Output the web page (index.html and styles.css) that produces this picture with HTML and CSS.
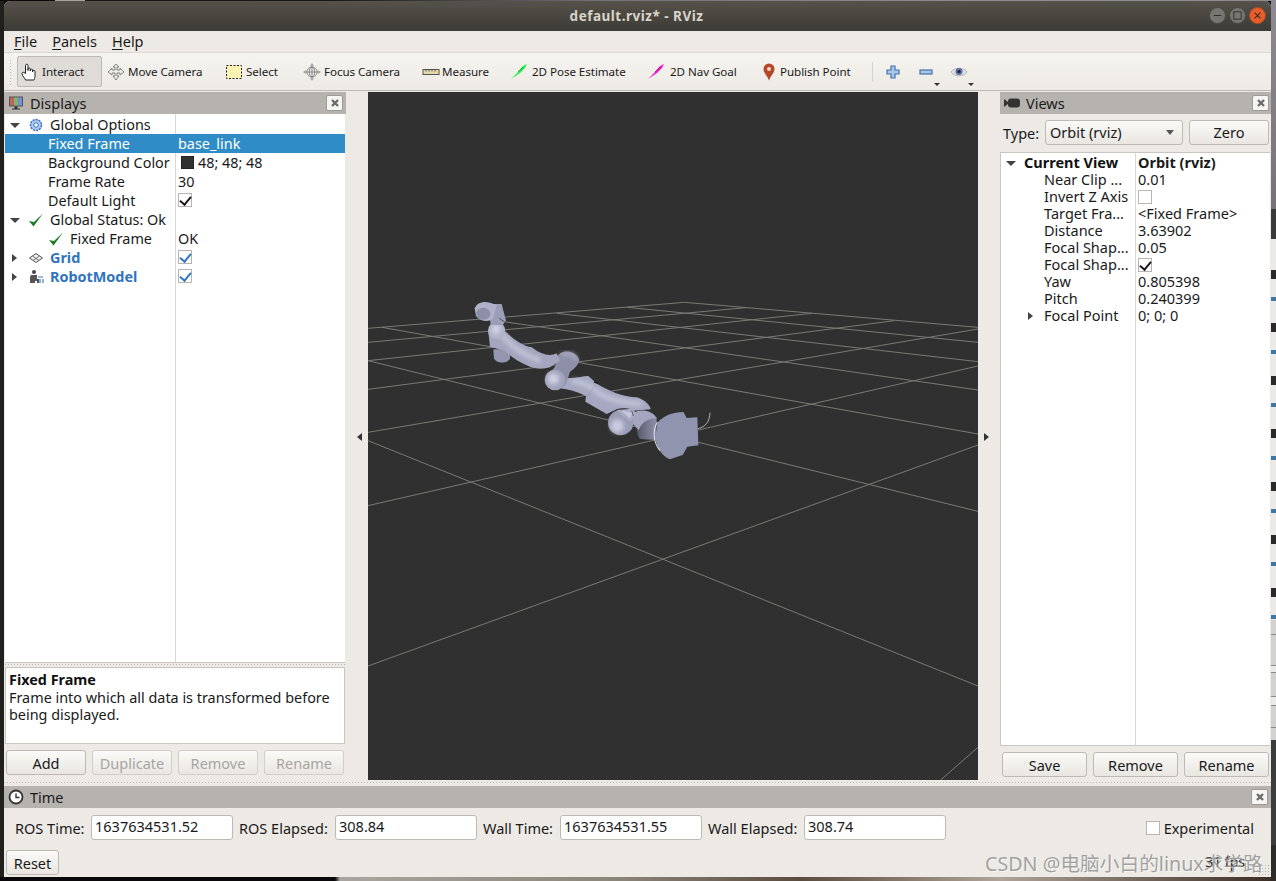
FILE: index.html
```html
<!DOCTYPE html>
<html lang="en">
<head>
<meta charset="utf-8">
<title>default.rviz* - RViz</title>
<link rel="stylesheet" href="styles.css">
</head>
<body>
<div class="window">
  <header class="titlebar">
    <span class="title">default.rviz* - RViz</span>
    <div class="wm">
      <span class="wm-btn"><svg viewBox="0 0 16 16" class="wm-ico"><path d="M3.5 8h9" stroke="#2e2d29" stroke-width="1.2"/></svg></span>
      <span class="wm-btn"><svg viewBox="0 0 16 16" class="wm-ico"><rect x="3.5" y="3.5" width="9" height="9" fill="none" stroke="#2e2d29" stroke-width="1.1"/></svg></span>
      <span class="wm-btn wm-close"><svg viewBox="0 0 16 16" class="wm-ico"><path d="M4.5 4.5l7 7M11.5 4.5l-7 7" stroke="#3a2418" stroke-width="1.3"/></svg></span>
    </div>
  </header>
  <nav class="menubar">
    <span><u>F</u>ile</span><span><u>P</u>anels</span><span><u>H</u>elp</span>
  </nav>
  <div class="toolbar">
    <span class="grip"></span>
    <div class="tool tool-on tool-interact">
      <svg class="ti" viewBox="0 0 18 18"><path d="M4.500 17C4 15 1 13 1 10.500c0-1 1-1.500 2-1l1.500 1V2.500c0-1.700 2.500-1.700 2.500 0V7.500V6c0-1.200 2.300-1.200 2.300 0v2V7c0-1.200 2.300-1.200 2.300 0v2-.800c0-1.200 2.400-1.200 2.400 0V13c0 2-.8 3-1 4z" fill="#fff" stroke="#222" stroke-width="1"/></svg>
      <span>Interact</span>
    </div>
    <div class="tool tool-move">
      <svg class="ti" viewBox="0 0 18 18"><path d="M9 1l3 3h-2v3h3V5l4 4-4 3v-2h-3v3h2l-3 4-3-4h2v-3H5v2L1 9l4-4v2h3V4H6z" fill="#ececec" stroke="#777" stroke-width=".9"/></svg>
      <span>Move Camera</span>
    </div>
    <div class="tool tool-select">
      <svg class="ti" viewBox="0 0 18 18"><rect x="1.500" y="2.500" width="15" height="13" fill="#fbf3b3" stroke="#222" stroke-width="1" stroke-dasharray="2 1.500"/></svg>
      <span>Select</span>
    </div>
    <div class="tool tool-focus">
      <svg class="ti" viewBox="0 0 18 18"><circle cx="9" cy="9" r="5" fill="#eee" stroke="#888"/><path d="M9 1v16M1 9h16M6.500 9a2.500 5 0 0 0 5 0M6.500 9a2.500 5 0 0 1 5 0" fill="none" stroke="#888" stroke-width="1"/><path d="M9 0l2 3H7zM9 18l2-3H7zM0 9l3-2v4zM18 9l-3-2v4z" fill="#aaa"/></svg>
      <span>Focus Camera</span>
    </div>
    <div class="tool tool-measure">
      <svg class="ti" viewBox="0 0 18 18"><rect x="1" y="6.500" width="16" height="5" fill="#e4d9a8" stroke="#555"/><path d="M4 6.500v2M7 6.500v2M10 6.500v2M13 6.500v2" stroke="#555"/></svg>
      <span>Measure</span>
    </div>
    <div class="tool tool-pose">
      <svg class="ti" viewBox="0 0 18 18"><path d="M1 16L8 9l5-6 4-2-2 4-5 5z" fill="#22f04a"/><path d="M8 9l5-5" stroke="#0e8a25" stroke-width=".8"/></svg>
      <span>2D Pose Estimate</span>
    </div>
    <div class="tool tool-nav">
      <svg class="ti" viewBox="0 0 18 18"><path d="M1 16L8 9l5-6 4-2-2 4-5 5z" fill="#f21cc8"/><path d="M8 9l5-5" stroke="#8a0f70" stroke-width=".8"/></svg>
      <span>2D Nav Goal</span>
    </div>
    <div class="tool tool-point">
      <svg class="ti" viewBox="0 0 18 18"><path d="M9 17.500C7.500 13 3.500 10 3.500 6a5.500 5.500 0 0 1 11 0c0 4-4 7-5.500 11.500z" fill="#b5482a"/><circle cx="9" cy="6" r="2" fill="#f0d9c6"/></svg>
      <span>Publish Point</span>
    </div>
    <span class="tool-sep"></span>
    <div class="tool tool-icon tool-plus">
      <svg class="ti" viewBox="0 0 18 18"><path d="M7 3h4v4h4v4h-4v4H7v-4H3V7h4z" fill="#a9c6e6" stroke="#3f74ad" stroke-width="1.200"/></svg>
    </div>
    <div class="tool tool-icon tool-minus">
      <svg class="ti" viewBox="0 0 18 18"><rect x="3" y="7" width="12" height="4" fill="#a9c6e6" stroke="#3f74ad" stroke-width="1.200"/></svg>
      <i class="drop"></i>
    </div>
    <div class="tool tool-icon tool-eye">
      <svg class="ti" viewBox="0 0 18 18"><path d="M1 9c3-5 13-5 16 0-3 5-13 5-16 0z" fill="#dfe1e8" stroke="#aaa" stroke-width=".8"/><circle cx="9" cy="8.500" r="3.500" fill="#5f6ea5"/><circle cx="9" cy="8.500" r="1.500" fill="#1c2236"/></svg>
      <i class="drop"></i>
    </div>
  </div>

  <div class="workspace">
    <section class="dock dock-left">
      <div class="dock-title">
        <svg class="dock-ico" viewBox="0 0 16 16"><rect x="1" y="1.500" width="14" height="10" fill="#555"/><rect x="2" y="2.500" width="4" height="8" fill="#c2605e"/><rect x="6" y="2.500" width="4" height="8" fill="#79b56f"/><rect x="10" y="2.500" width="4" height="8" fill="#7a8fcf"/><path d="M6.500 11.500h3v2h-3zM4 13.500h8v1H4z" fill="#333"/></svg>
        <span>Displays</span>
        <span class="dock-close"><svg viewBox="0 0 10 10"><path d="M2 2l6 6M8 2L2 8" stroke="#6b6b6b" stroke-width="2.400"/></svg></span>
      </div>
      <div class="tree tree-displays">
        <div class="tree-row"><span class="c1"><i class="tw tw-down"></i><svg class="ri" viewBox="0 0 16 16"><circle cx="8" cy="8" r="5.500" fill="#a9c8ee" stroke="#3f74c0" stroke-width="1.500" stroke-dasharray="2.200 .9"/><circle cx="8" cy="8" r="2.200" fill="#fff" stroke="#3f74c0"/></svg><span class="lbl">Global Options</span></span><span class="c2"></span></div>
        <div class="tree-row sel"><span class="c1 ind"><span class="lbl">Fixed Frame</span></span><span class="c2">base_link</span></div>
        <div class="tree-row"><span class="c1 ind"><span class="lbl">Background Color</span></span><span class="c2"><i class="swatch"></i>48; 48; 48</span></div>
        <div class="tree-row"><span class="c1 ind"><span class="lbl">Frame Rate</span></span><span class="c2">30</span></div>
        <div class="tree-row"><span class="c1 ind"><span class="lbl">Default Light</span></span><span class="c2"><i class="cb on"></i></span></div>
        <div class="tree-row"><span class="c1"><i class="tw tw-down"></i><svg class="ri" viewBox="0 0 16 16"><path d="M1 9l4.500 5.500L15 1.500 6 10z" fill="#1f7a2a"/></svg><span class="lbl">Global Status: Ok</span></span><span class="c2"></span></div>
        <div class="tree-row"><span class="c1 ind2"><svg class="ri" viewBox="0 0 16 16"><path d="M1 9l4.500 5.500L15 1.500 6 10z" fill="#1f7a2a"/></svg><span class="lbl">Fixed Frame</span></span><span class="c2">OK</span></div>
        <div class="tree-row"><span class="c1"><i class="tw tw-right"></i><svg class="ri" viewBox="0 0 16 16"><path d="M8 3.500l6.500 4.500L8 12.500 1.500 8z" fill="#eee" stroke="#555"/><path d="M4.500 6l6.500 4.500M11.500 6L5 10.500" stroke="#555" stroke-width=".8"/></svg><span class="lbl lnk">Grid</span></span><span class="c2"><i class="cb on blue"></i></span></div>
        <div class="tree-row"><span class="c1"><i class="tw tw-right"></i><svg class="ri" viewBox="0 0 16 16"><circle cx="6" cy="3" r="2" fill="#444"/><path d="M3 6h6v4h2v4H9v-2H7v2H2V8z" fill="#555"/><path d="M10 8h5M12 10v4M15 10v4" stroke="#4a7bc0" stroke-width="1.200"/></svg><span class="lbl lnk">RobotModel</span></span><span class="c2"><i class="cb on blue"></i></span></div>
      </div>
      <div class="split-h"></div>
      <div class="help">
        <b>Fixed Frame</b><br>Frame into which all data is transformed before being displayed.
      </div>
      <div class="btn-row">
        <button class="btn">Add</button>
        <button class="btn off">Duplicate</button>
        <button class="btn off">Remove</button>
        <button class="btn off">Rename</button>
      </div>
    </section>

    <div class="gutter"><i class="arrow-l"></i></div>

    <main class="center">
      <svg class="scene" viewBox="20 -594 1518 2064" preserveAspectRatio="none">
        <defs>
          <filter id="soft" x="-40%" y="-40%" width="180%" height="180%"><feGaussianBlur stdDeviation="6"/></filter>
          <linearGradient id="cyl" x1="0" y1="0" x2="1" y2="0">
            <stop offset="0" stop-color="#55586a"/><stop offset=".5" stop-color="#74778c"/><stop offset="1" stop-color="#8c8fa6"/>
          </linearGradient>
        </defs>
        <g class="grid-lines">
          <path d="M808 37L1538 112M665 52L1538 157M490 70L1538 215M340 92L1538 300M55 112L1538 432M20 212L1538 664M20 452L1538 1188"/>
          <path d="M20 115L808 37M20 157L960 53M20 212L1125 70M20 298L1330 92M20 427L1538 117M20 647L1538 228M20 1128L1538 465M1445 1470L1538 1372"/>
        </g>
        <g transform="translate(248.900 0) scale(.8297 1)" stroke-linejoin="round" fill="none">
          <!-- end effector -->
          <path d="M750 368C748 395 738 410 714 416" stroke="#c9c9c9" stroke-width="2.500"/>
          <path d="M532 392L590 382L588 450L540 447C530 435 528 410 532 392Z" fill="url(#cyl)"/>
          <path d="M592 398C612 376 640 366 670 366L680 384L712 382L715 466L682 470L668 495L630 508C605 500 590 470 586 445Z" fill="#9094ae"/>
          <path d="M592 396C578 420 578 455 600 482" stroke="#dfe1ea" stroke-width="3"/>
          <!-- wrist -->
          <path d="M522 368C540 356 578 360 590 385C568 384 548 394 536 420L515 398Z" fill="#a3a6be"/>
          <circle cx="482" cy="398" r="38" fill="#9a9db6"/>
          <circle cx="472" cy="408" r="20" fill="#c9cbde" filter="url(#soft)"/>
          <path d="M470 360L518 356L530 372L512 394L488 378Z" fill="#a9acc3"/>
          <path d="M484 362L518 368L510 385Z" fill="#c5c7da"/>
          <path d="M515 362L520 378" stroke="#33343c" stroke-width="2"/>
          <!-- forearm -->
          <path d="M305 262C340 268 370 258 385 258L412 282C440 300 490 322 530 322C555 330 570 345 572 358L520 362C505 352 480 355 470 358L440 372L376 335L378 318C350 305 325 298 300 295Z" fill="#a5a8c0"/>
          <path d="M335 272C360 276 390 285 410 305C440 325 490 340 545 342" stroke="#cdd0e1" stroke-width="14" filter="url(#soft)" opacity=".75"/>
          <path d="M408 284L378 322" stroke="#8d90a8" stroke-width="1.500"/>
          <path d="M402 276L415 280" stroke="#1c1c1c" stroke-width="4"/>
          <!-- elbow -->
          <path d="M300 190C320 178 350 185 358 210C355 225 345 235 330 245C325 260 320 280 312 290L260 280L262 250C285 240 295 215 285 205Z" fill="#8d90a8"/>
          <path d="M305 195C322 185 342 192 350 210" stroke="#b0b3c8" stroke-width="9" filter="url(#soft)"/>
          <circle cx="285" cy="270" r="31" fill="#a0a3bb"/>
          <circle cx="280" cy="266" r="17" fill="#d0d2e3" filter="url(#soft)"/>
          <!-- upper arm -->
          <path d="M100 178H150V205C145 222 108 222 102 205Z" fill="#9497af"/>
          <path d="M138 125C160 150 190 168 215 172C245 195 270 200 290 190L300 212L270 232C250 238 225 238 205 228C175 215 150 200 135 182L90 170L85 125Z" fill="#a3a6be"/>
          <path d="M125 135C150 165 190 195 240 212" stroke="#cfd1e2" stroke-width="14" filter="url(#soft)" opacity=".75"/>
          <circle cx="110" cy="122" r="26" fill="#b0b3c8"/>
          <circle cx="108" cy="118" r="13" fill="#d4d6e5" filter="url(#soft)"/>
          <!-- end cap -->
          <path d="M88 70L100 42L125 42L138 92L128 105L92 105Z" fill="#9b9eb6"/>
          <path d="M44 55C50 38 70 32 90 38L110 45L100 85C88 98 60 95 48 78Z" fill="#aeb1c7"/>
          <ellipse cx="70" cy="71" rx="21" ry="18" fill="#8c8fa6"/>
          <path d="M118 85L137 98" stroke="#2c2c2c" stroke-width="2"/>
        </g>
      </svg>
    </main>

    <div class="gutter"><i class="arrow-r"></i></div>

    <section class="dock dock-right">
      <div class="dock-title title-views">
        <svg class="dock-ico" viewBox="0 0 16 16"><path d="M0 4l4 3V9l-4 3z" fill="#333"/><rect x="4" y="3.500" width="12" height="9" rx="3" fill="#333"/></svg>
        <span>Views</span>
        <span class="dock-close"><svg viewBox="0 0 10 10"><path d="M2 2l6 6M8 2L2 8" stroke="#6b6b6b" stroke-width="2.400"/></svg></span>
      </div>
      <div class="type-row">
        <span class="type-lbl">Type:</span>
        <span class="combo"><span>Orbit (rviz)</span><i class="combo-arrow"></i></span>
        <button class="btn btn-zero">Zero</button>
      </div>
      <div class="tree tree-views">
        <div class="vrow"><span class="v1"><i class="tw tw-down tw-v"></i><b class="vhead">Current View</b></span><span class="v2"><b>Orbit (rviz)</b></span></div>
        <div class="vrow"><span class="v1 vind">Near Clip ...</span><span class="v2">0.01</span></div>
        <div class="vrow"><span class="v1 vind">Invert Z Axis</span><span class="v2"><i class="cb"></i></span></div>
        <div class="vrow"><span class="v1 vind">Target Fra...</span><span class="v2">&lt;Fixed Frame&gt;</span></div>
        <div class="vrow"><span class="v1 vind">Distance</span><span class="v2">3.63902</span></div>
        <div class="vrow"><span class="v1 vind">Focal Shap...</span><span class="v2">0.05</span></div>
        <div class="vrow"><span class="v1 vind">Focal Shap...</span><span class="v2"><i class="cb on"></i></span></div>
        <div class="vrow"><span class="v1 vind">Yaw</span><span class="v2">0.805398</span></div>
        <div class="vrow"><span class="v1 vind">Pitch</span><span class="v2">0.240399</span></div>
        <div class="vrow"><span class="v1 vsub"><i class="tw tw-right tw-v2"></i>Focal Point</span><span class="v2">0; 0; 0</span></div>
      </div>
      <div class="btn-row btn-row-views">
        <button class="btn">Save</button>
        <button class="btn">Remove</button>
        <button class="btn">Rename</button>
      </div>
    </section>
  </div>
  <div class="split-bottom"></div>

  <section class="time-dock">
    <div class="dock-title title-time">
      <svg class="dock-ico" viewBox="0 0 16 16"><circle cx="8" cy="8" r="6.500" fill="#fff" stroke="#333" stroke-width="1.800"/><path d="M8 4.500V8.500H11.500" fill="none" stroke="#333" stroke-width="1.400"/></svg>
      <span>Time</span>
      <span class="dock-close"><svg viewBox="0 0 10 10"><path d="M2 2l6 6M8 2L2 8" stroke="#6b6b6b" stroke-width="2.400"/></svg></span>
    </div>
    <div class="time-row">
      <label class="tl tl-a">ROS Time:</label><span class="field">1637634531.52</span>
      <label class="tl tl-b">ROS Elapsed:</label><span class="field">308.84</span>
      <label class="tl tl-c">Wall Time:</label><span class="field">1637634531.55</span>
      <label class="tl tl-b">Wall Elapsed:</label><span class="field">308.74</span>
      <span class="exp"><i class="cb"></i>Experimental</span>
    </div>
    <div class="reset-row">
      <button class="btn btn-reset">Reset</button>
      <span class="fps">31 fps</span>
      <span class="sizegrip"></span>
    </div>
  </section>
  <div class="watermark">CSDN @电脑小白的linux求学路</div>
</div>
<aside class="desk-strip">
  <div class="ds-a"></div><div class="ds-b"></div><div class="ds-c0"></div><div class="ds-c"></div><div class="ds-d"></div><div class="ds-e"></div><div class="ds-f"></div>
</aside>
</body>
</html>
```

FILE: styles.css
```css
* { box-sizing: border-box; }
html, body { margin: 0; height: 100%; }
body {
  width: 1276px;
  height: 881px;
  overflow: hidden;
  display: flex;
  background:
    linear-gradient(90deg, #0c0a09 0 55px, #a8a5a0 55px 85px, #1a1816 85px 330px, #6f7478 600px, #8d9196 1000px, #8f8b90 1276px) top / 100% 1px no-repeat,
    linear-gradient(90deg, #0a0808 0 335px, #a9a5a0 340px, #8b8478 620px, #5a4c3e 800px, #b0a498 1000px, #3a2c22 1276px) bottom / 100% 4px no-repeat,
    linear-gradient(90deg, #22201d 0 4px, #0c0a09 4px);
  padding: 1px 0 4px 4px;
  font-family: "Noto Sans", sans-serif;
  font-size: 14.5px;
  color: #1a1a1a;
}
.window {
  position: relative;
  width: 1267px;
  height: 876px;
  background: #edeae5;
  border-radius: 6px 6px 0 0;
  display: flex;
  flex-direction: column;
  overflow: hidden;
  flex: none;
}

/* title bar */
.titlebar {
  height: 30px;
  flex: none;
  background: linear-gradient(#56524b, #3d3b36);
  position: relative;
  display: flex;
  align-items: center;
  justify-content: center;
}
.title {
  color: #d8d4c9;
  font-weight: 700;
  font-size: 13.5px;
  letter-spacing: .5px;
  margin-left: -2px;
}
.wm {
  position: absolute;
  right: 5px;
  top: 6px;
  display: flex;
  gap: 3px;
}
.wm-btn {
  width: 17px;
  height: 17px;
  border-radius: 50%;
  background: #787670;
  border: 1px solid #4a4843;
  display: flex;
  align-items: center;
  justify-content: center;
}
.wm-close { background: #e45f2b; border-color: #b04820; }
.wm-ico { width: 13px; height: 13px; }

/* menu */
.menubar {
  height: 22px;
  flex: none;
  display: flex;
  gap: 15px;
  padding: 0 0 2px 10px;
  align-items: center;
  border-bottom: 1px solid #dcd8d2;
}
.menubar u { text-underline-offset: 2px; }

/* toolbar */
.toolbar {
  height: 38px;
  flex: none;
  display: flex;
  align-items: center;
  background: linear-gradient(#f6f4f0, #edeae5);
  border-bottom: 1px solid #bdb9b4;
  font-size: 11.6px;
  letter-spacing: -.05px;
  padding-left: 5px;
}
.grip {
  width: 4px;
  height: 26px;
  margin-right: 4px;
  background-image: radial-gradient(#bbb7b1 .7px, transparent .8px);
  background-size: 3px 3px;
}
.tool {
  height: 31px;
  display: flex;
  align-items: center;
  gap: 3px;
  flex: none;
  position: relative;
}
.ti { width: 18px; height: 18px; flex: none; }
.tool-on {
  background: #dfdcd7;
  border: 1px solid #bdb9b4;
  border-radius: 2px;
}
.tool-interact { width: 85px; padding-left: 3px; margin-right: 5px; }
.tool-move { width: 118px; }
.tool-select { width: 78px; gap: 3px; }
.tool-focus { width: 119px; gap: 3px; }
.tool-measure { width: 88px; gap: 2px; }
.tool-pose { width: 137px; gap: 4px; }
.tool-nav { width: 113px; gap: 5px; }
.tool-point { width: 112px; gap: 2px; }
.tool-sep { width: 1px; height: 20px; background: #d6d2cc; margin-right: 11px; flex: none; }
.tool-icon { width: 33px; }
.drop {
  position: absolute;
  right: 10px;
  bottom: 1px;
  border: 3px solid transparent;
  border-top: 3px solid #333;
  border-bottom: 0;
}
.tool-eye .drop { right: 9px; }

/* workspace */
.workspace {
  height: 690px;
  flex: none;
  display: flex;
  padding-top: 1px;
}
.dock { display: flex; flex-direction: column; flex: none; }
.dock-left { width: 342px; }
.dock-right { width: 271px; }
.gutter {
  width: 22px;
  flex: none;
  display: flex;
  align-items: center;
  justify-content: center;
}
.arrow-l { border: 4px solid transparent; border-right: 5px solid #333; border-left: 0; margin-left: 5px; }
.arrow-r { border: 4px solid transparent; border-left: 5px solid #333; border-right: 0; margin-right: 6px; }
.center { width: 610px; flex: none; height: 688px; background: #303030; }
.scene { display: block; width: 610px; height: 688px; }
.grid-lines path { fill: none; stroke: #797975; stroke-width: 1; vector-effect: non-scaling-stroke; }

.dock-title {
  height: 22px;
  flex: none;
  background: #b6b2ae;
  display: flex;
  align-items: center;
  padding: 0 3px 0 4px;
  gap: 6px;
  position: relative;
}
.dock-ico { width: 16px; height: 16px; flex: none; }
.dock-close {
  position: absolute;
  right: 3px;
  top: 3px;
  width: 17px;
  height: 16px;
  background: #f6f5f3;
  border: 1px solid #9e9a96;
  border-radius: 2px;
  display: flex;
  align-items: center;
  justify-content: center;
}
.dock-close svg { width: 10px; height: 10px; }

/* trees */
.tree { background: #fff; flex: none; }
.tree-displays {
  height: 549px;
  margin: 0 1px;
  padding-top: 1px;
  border-bottom: 1px solid #c9c5c0;
  background: linear-gradient(90deg, #fff 170px, #dad7d3 170px 171px, #fff 171px);
  font-size: 14.4px;
}
.tree-row {
  height: 19px;
  line-height: 19px;
  display: flex;
  align-items: center;
}
.c1 { width: 171px; display: flex; align-items: center; flex: none; white-space: nowrap; }
.c2 { padding-left: 2px; display: flex; align-items: center; }
.c2 .cb { margin-top: -2px; }
.ind { padding-left: 43px; }
.ind2 { padding-left: 43px; }
.tw { width: 0; height: 0; border: 4px solid transparent; flex: none; display: block; }
.tw-down { border-top: 5px solid #444; border-bottom: 0; margin: 1px 8px 0 5px; border-left-width: 5px; border-right-width: 5px; }
.tw-right { border-left: 5px solid #444; border-right: 0; margin: 0 11px 0 7px; }
.ri { width: 16px; height: 16px; flex: none; }
.lbl { margin-left: 6px; }
.ind .lbl { margin-left: 0; }
.lnk { color: #2f74c0; font-weight: 700; }
.sel { background: #308cc6; color: #fff; }
.swatch { width: 13px; height: 13px; background: #303030; border: 1px solid #222; margin: 0 4px 0 3px; display: block; }
.cb {
  width: 14px;
  height: 14px;
  display: block;
  background: #fff;
  border: 1px solid #b8b4af;
  position: relative;
  flex: none;
}
.cb.on::after {
  content: "";
  position: absolute;
  left: 3px;
  top: 0;
  width: 5px;
  height: 9px;
  border: solid #1a1a1a;
  border-width: 0 2px 2px 0;
  transform: rotate(40deg);
}
.cb.blue::after { border-color: #2f74c0; }

.split-h {
  height: 4px;
  flex: none;
  background-image: radial-gradient(#bdb9b4 .6px, transparent .7px);
  background-size: 3px 3px;
  background-repeat: repeat-x;
  background-position: 168px 0;
}
.help {
  height: 77px;
  flex: none;
  margin: 0 1px;
  padding: 3px 3px;
  background: #fff;
  border: 1px solid #c9c5c0;
  line-height: 17.5px;
  font-size: 14.4px;
}
.help b { color: #111; }
.btn-row {
  display: flex;
  gap: 6px;
  padding: 6px 2px 0;
  flex: none;
}
.btn {
  font: inherit;
  width: 80px;
  height: 25px;
  border: 1px solid #bdb9b4;
  border-radius: 3px;
  background: linear-gradient(#fbfaf8, #e9e6e1);
  color: #1a1a1a;
  padding: 0;
  flex: none;
}
.btn.off { color: #a8a5a1; border-color: #d2cec9; }
.btn-row-views .btn { width: 85px; }

/* views */
.title-views .dock-close { right: 2px; }
.type-row {
  height: 38px;
  flex: none;
  display: flex;
  align-items: center;
  padding: 0 2px 1px 3px;
}
.type-lbl { width: 42px; flex: none; }
.combo {
  width: 138px;
  height: 25px;
  border: 1px solid #bdb9b4;
  border-radius: 3px;
  background: linear-gradient(#fbfaf8, #e9e6e1);
  display: flex;
  align-items: center;
  justify-content: space-between;
  padding: 0 8px 2px 4px;
  flex: none;
}
.combo-arrow { border: 4px solid transparent; border-top: 5px solid #555; border-bottom: 0; margin-top: 2px; }
.btn-zero { margin-left: 6px; padding-bottom: 2px; }
.tree-views {
  height: 594px;
  border: 1px solid #c9c5c0;
  border-right: 0;
  width: 270px;
  padding-top: 1px;
  background: linear-gradient(90deg, #fff 134px, #dad7d3 134px 135px, #fff 135px);
}
.vrow { height: 17px; line-height: 17px; display: flex; align-items: center; white-space: nowrap; }
.vrow .v2 .cb { margin-top: 0; }
.v1 { width: 135px; flex: none; display: flex; align-items: center; }
.v2 { padding-left: 2px; display: flex; align-items: center; }
.vind { padding-left: 43px; }
.vsub { padding-left: 27px; }
.tw-v { margin-left: 5px; margin-right: 8px; }
.tw-v2 { margin: 0 11px 0 0; }
.vhead { color: #111; }

/* bottom */
.split-bottom {
  height: 5px;
  flex: none;
  background-image: radial-gradient(#bdb9b4 .6px, transparent .7px);
  background-size: 3px 3px;
  background-repeat: repeat-x;
  background-position: 632px 0;
}
.time-dock { flex: 1; display: flex; flex-direction: column; min-height: 0; }
.time-row {
  height: 39px;
  flex: none;
  display: flex;
  align-items: center;
  padding-left: 11px;
}
.tl { flex: none; white-space: nowrap; }
.tl-a { width: 76px; }
.tl-b { width: 96px; }
.tl-c { width: 77px; }
.field {
  width: 142px;
  height: 25px;
  background: #fff;
  border: 1px solid #bdb9b4;
  border-radius: 3px;
  padding-left: 3px;
  line-height: 21px;
  margin-right: 6px;
  flex: none;
}
.exp { margin-left: auto; margin-right: 17px; display: flex; align-items: center; gap: 4px; }
.reset-row {
  flex: 1;
  display: flex;
  align-items: flex-start;
  padding: 3px 2px 0;
  position: relative;
}
.btn-reset { width: 53px; height: 25px; }
.fps { position: absolute; right: 26px; top: 5px; font-size: 14px; color: #222; }
.sizegrip {
  position: absolute;
  right: 1px;
  bottom: 1px;
  width: 12px;
  height: 12px;
  background-image: radial-gradient(#b5b1ac .7px, transparent .8px);
  background-size: 3px 3px;
}
.watermark {
  position: absolute;
  left: 981px;
  top: 847px;
  font-family: "Noto Sans", "Noto Sans CJK SC", sans-serif;
  font-size: 19.7px;
  color: rgba(130,130,130,.72);
  text-shadow: 1px 1px 0 rgba(255,255,255,.5);
  white-space: nowrap;
}

/* desktop behind the window */
.desk-strip {
  width: 5px;
  margin-top: -1px;
  margin-bottom: -4px;
  display: flex;
  flex-direction: column;
  flex: none;
}
.ds-a { height: 209px; background: linear-gradient(#8e8a92, #77727a); }
.ds-b { height: 30px; background: #3a3a38; }
.ds-c0 { height: 26px; background: #eceae6; }
.ds-c {
  height: 355px;
  background: repeating-linear-gradient(#eceae6 0 5px, #2a2a2a 5px 14px, #eceae6 14px 32px, #3a78a8 32px 36px, #eceae6 36px 53px);
}
.ds-d {
  height: 120px;
  background: linear-gradient(#d3d2ce 0 14px, #8b8b88 14px 15px, #d3d2ce 15px 45px, #8b8b88 45px 46px, #eceae6 46px 52px, #8b8b88 52px 53px, #d3d2ce 53px 76px, #8b8b88 76px 77px, #eceae6 77px 85px, #8b8b88 85px 86px, #d3d2ce 86px 107px, #8b8b88 107px 108px, #d3d2ce 108px);
}
.ds-e { height: 105px; background: #3b3d3c; }
.ds-f { flex: 1; background: #2e2c2a; }
```
